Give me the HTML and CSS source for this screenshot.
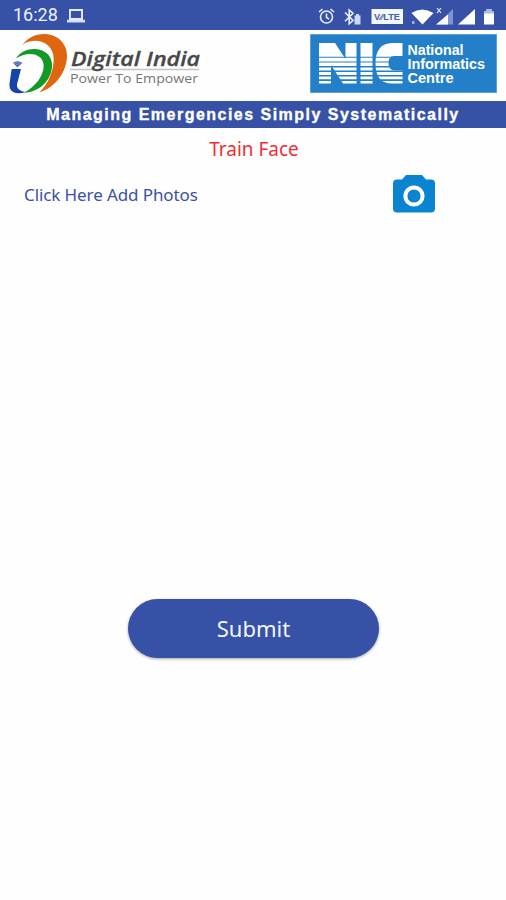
FILE: index.html
```html
<!DOCTYPE html>
<html lang="en">
<head>
<meta charset="utf-8">
<title>Train Face</title>
<link rel="stylesheet" href="styles.css">
</head>
<body>
<div class="status">
  <span class="clock">16:28</span>
  <svg class="laptop" width="18" height="14" viewBox="0 0 18 14"><path d="M3 1h12v9H3z" fill="none" stroke="#e6edff" stroke-width="1.900"/><path d="M0 10.800h18v2.700H0z" fill="#d5dfff"/></svg>
  <svg class="tray" width="180" height="20" viewBox="0 0 180 20">
    <g fill="none" stroke="#e9efff" stroke-width="1.600">
      <circle cx="10.500" cy="11" r="6"/><path d="M10.500 7.500v4l2.600 1.600M3 6l3.500-3M18 6l-3.500-3"/>
      <path d="M29 6.500l8 8-3.800 3.300V4l3.800 3.200-8 8"/>
    </g>
    <path d="M38.500 9.500h6v9h-6zM40 8h3v1.500h-3z" fill="#ccd8f9"/>
    <path d="M55.500 3h31.500v15H55.500z" fill="#f2f6ff"/>
    <text class="lte" x="58" y="14" textLength="26" lengthAdjust="spacingAndGlyphs">V⁄⁄LTE</text>
    <path d="M95.500 7Q106 0 117.500 7L106.500 18.500z" fill="#fff"/>
    <path d="M96 15h2.500v3H96z" fill="#9eb0e5"/>
    <path d="M137 3v15.500h-16z" fill="#7f95d3"/><path d="M132 8.500v10h-12z" fill="#fff"/>
    <path d="M121 2l4 5m0-5l-4 5" stroke="#e9efff" stroke-width="1.200"/>
    <path d="M159 3v15.500h-17z" fill="#fff"/>
    <path d="M168 5.500h2.500V3h5v2.500h2.500v13h-10z" fill="#fff"/><path d="M168 5.500h2.500V3h5v2.500h2.500v2h-10z" fill="#aabcec"/>
  </svg>
</div>
<header class="brands">
  <svg class="india" width="204" height="70" viewBox="0 0 204 70">
    <g transform="translate(0 -2) scale(.33333)">
      <path d="M67 50C85 28 108 17 136 18C174 20 202 48 201 84C200 130 168 178 118 193C147 165 162 125 161 90C160 47 111 23 67 50Z" fill="#df650e"/>
      <path d="M48 91C63 70 82 62 105 63C137 64 159 86 156 118C152 156 121 193 72 194C109 174 130 143 131 114C132 81 91 65 48 91Z" fill="#129a27"/>
      <path d="M35 123H63L51 169Q48 188 76 192Q55 199 39 192Q25 184 29 163Z" fill="#1743ad"/>
      <path d="M39 105Q52 94 67 105L52 118Z" fill="#425eac"/>
      <path d="M42 107Q52 101 62 107M47 111Q52 107 57 111" stroke="#c5d0ed" stroke-width="1.500" fill="none"/>
    </g>
    <path d="M70 39.500H199" stroke="#c4c4c4" stroke-width="1.500"/>
    <text class="di-name" x="71" y="36" textLength="129" lengthAdjust="spacingAndGlyphs">Digital India</text>
    <text class="di-tag" x="70" y="53" textLength="128" lengthAdjust="spacingAndGlyphs">Power To Empower</text>
  </svg>
  <svg class="nic" width="187" height="59" viewBox="0 0 187 59">
    <path d="M0 0H187V59H0z" fill="#70ade0"/><path d="M.700 .700H186.300V58.300H.700z" fill="#2380c8"/>
    <g fill="#fff">
      <path d="M9 9H25L35.500 25V9H46.500V49.500H33L21 31V49.500H9z"/>
      <path d="M50.500 9H62.500V49.500H50.500z"/>
      <path d="M92.500 9V22H84Q78.500 22 78.500 29T84 36.500H92.500V49.500H82Q65.500 49.500 65.500 29.500T82 9z"/>
    </g>
    <g fill="#2380c8"><path d="M8 22.800h86v1H8zM8 27.400h86v1.200H8zM8 32h86v1.400H8zM8 36.500h86v1.600H8zM8 41h86v1.600H8zM8 45.300h86v1.600H8z"/></g>
    <g class="nic-text">
      <text x="97.500" y="21" textLength="56" lengthAdjust="spacingAndGlyphs">National</text>
      <text x="97.500" y="34.500" textLength="77.500" lengthAdjust="spacingAndGlyphs">Informatics</text>
      <text x="97.500" y="48.500" textLength="46" lengthAdjust="spacingAndGlyphs">Centre</text>
    </g>
  </svg>
</header>
<div class="banner">Managing Emergencies Simply Systematically</div>
<main>
  <h1>Train Face</h1>
  <div class="photos">
    <span>Click Here Add Photos</span>
    <svg width="42" height="38" viewBox="0 0 42 38"><path d="M13 0H29L33 4.500H38Q42 4.500 42 8.500V33.500Q42 37.500 38 37.500H4Q0 37.500 0 33.500V8.500Q0 4.500 4 4.500H9z" fill="#0984d1"/><circle cx="21" cy="21" r="8.600" fill="none" stroke="#fff" stroke-width="4"/></svg>
  </div>
  <button class="submit">Submit</button>
</main>
</body>
</html>
```
FILE: styles.css
```css
* { box-sizing: border-box; }
body {
  margin: 0;
  height: 900px;
  background: #fefefe;
  font-family: "Noto Sans", sans-serif;
  overflow: hidden;
}
.status {
  height: 30px;
  padding: 0 10px 0 13px;
  display: flex;
  align-items: center;
  background: #3751a6;
  color: #eef2ff;
}
.clock { font: 18px/30px Roboto, sans-serif; width: 54px; white-space: nowrap; }
.laptop { margin-top: 2px; }
.tray { margin: 1px 0 0 auto; }
.lte { font: bold 9px "Liberation Sans", sans-serif; fill: #4b5e9f; }
.brands {
  height: 71px;
  padding: 0 9px 0 0;
  display: flex;
  justify-content: space-between;
}
.india { flex: none; }
.nic { margin-top: 4px; flex: none; }
.di-name { font: italic 600 20px "Open Sans", sans-serif; fill: #484848; stroke: #484848; stroke-width: .3px; }
.di-tag { font: 13px "Open Sans", sans-serif; fill: #777; }
.nic-text { font: bold 14px "Liberation Sans", sans-serif; fill: #fff; }
.banner {
  height: 27px;
  background: #3751a6;
  color: #fff;
  text-align: center;
  font: bold 16px/27px "Liberation Sans", sans-serif;
  letter-spacing: 1.48px;
  white-space: nowrap;
  -webkit-text-stroke: .35px #fff;
}
main { display: flex; flex-direction: column; }
h1 {
  margin: 7px 0 0;
  padding-left: 2px;
  text-align: center;
  font-size: 19px;
  line-height: 28px;
  font-weight: 400;
  color: #f02f35;
}
.photos {
  height: 42px;
  margin-top: 10px;
  padding: 0 71px 0 24px;
  display: flex;
  align-items: center;
  justify-content: space-between;
  font-size: 17px;
  letter-spacing: -.1px;
  color: #3c51a5;
}
.submit {
  width: 251px;
  height: 59px;
  margin: 384px 0 0 128px;
  padding: 0;
  border: 0;
  border-radius: 30px;
  background: #3751a6;
  box-shadow: 0 1px 3px rgba(0, 0, 0, .35);
  color: #f1f5ff;
  font: 22px/59px "Noto Sans", sans-serif;
}
```
